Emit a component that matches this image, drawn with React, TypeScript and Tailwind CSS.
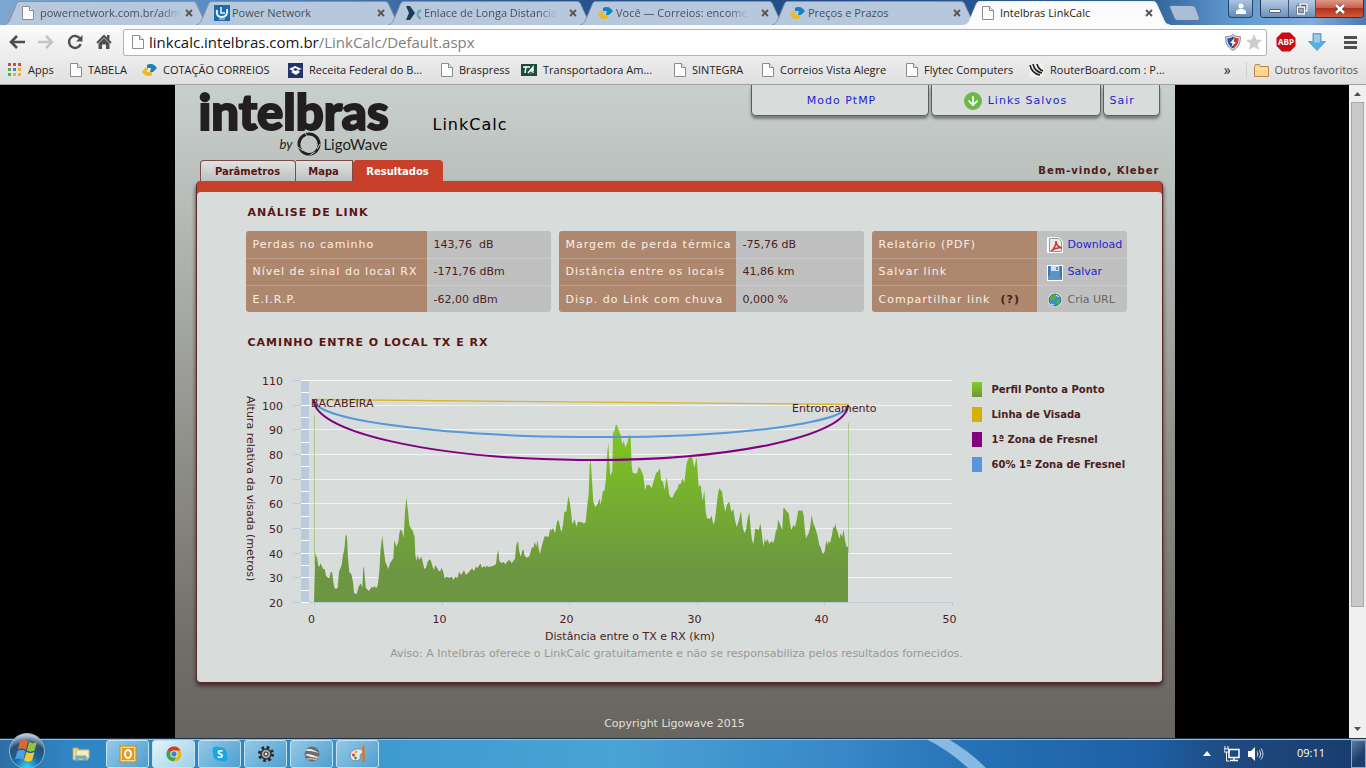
import React from 'react'
import { ArrowDown } from 'lucide-react'

type Row = { label: string; value: React.ReactNode; help?: boolean }

const verdana = "font-['DejaVu_Sans',Verdana,sans-serif]"

const grid = [110, 100, 90, 80, 70, 60, 50, 40, 30, 20]
const kms = [0, 10, 20, 30, 40, 50]

const yOf = (m: number) => Math.round(15 + (110 - m) * 2.467) + 0.5
const xOf = (km: number) => Math.round(68 + km * 12.76) + 0.5

// terrain outline, three units to a chart pixel
const terrain =
  '238,560 240,572 243,578 247,602 250,605 254,594 258,605 262,612 266,612 270,632 276,638 280,640 284,622 288,620 292,652 295,668 300,672 305,668 309,620 317,600 321,570 325,552 328,520 330,508 333,515 336,580 340,622 346,628 351,650 354,683 362,688 368,665 374,655 379,668 382,605 384,608 389,668 398,678 408,665 412,668 416,662 420,670 425,662 430,620 434,550 439,512 444,560 448,590 453,602 457,612 462,595 472,580 475,525 481,545 487,530 490,505 494,493 499,500 503,520 507,440 511,398 515,430 520,480 524,490 529,494 533,508 536,515 538,570 541,588 545,570 549,585 556,575 560,590 565,612 570,608 575,590 580,583 585,588 590,605 594,615 598,600 604,610 608,618 613,618 617,608 621,618 626,640 632,635 640,638 648,635 652,646 657,635 665,638 669,620 675,630 684,616 690,630 698,622 708,610 714,618 720,604 724,610 730,600 734,596 738,610 744,602 748,608 752,602 758,606 770,603 780,598 783,570 787,556 790,588 797,595 803,590 808,598 815,588 821,585 827,595 832,588 837,582 841,540 846,528 850,560 854,575 858,560 862,552 866,572 872,578 880,574 888,545 892,550 896,530 901,545 904,525 908,550 912,568 918,540 926,514 938,515 943,490 947,497 951,488 957,505 963,470 967,464 971,480 976,502 981,480 985,440 ' +
  '991,440 997,393 1001,410 1004,430 1009,478 1016,463 1021,485 1026,470 1040,472 1044,476 1049,470 1054,420 1058,390 1061,300 1064,285 1067,330 1072,410 1078,427 1086,415 1091,400 1094,420 1100,380 1106,375 1110,340 1114,260 1117,233 1120,290 1123,333 1126,325 1129,320 1131,205 1136,195 1139,180 1143,180 1148,195 1154,210 1159,240 1163,226 1168,248 1175,230 1180,208 1184,220 1187,300 1190,323 1203,326 1208,305 1214,312 1222,332 1227,375 1232,360 1240,360 1247,370 1254,345 1260,325 1267,318 1272,310 1275,345 1281,350 1286,375 1291,337 1295,355 1300,390 1305,398 1310,397 1315,385 1324,372 1328,358 1334,357 1339,340 1345,353 1350,310 1353,290 1358,280 1362,272 1369,280 1375,308 1379,290 1382,276 1385,320 1388,365 1394,360 1400,408 1405,374 1409,440 1413,460 1421,462 1427,452 1432,480 1437,465 1442,420 1446,385 1450,370 1458,380 1462,410 1468,440 1473,418 1480,410 1486,440 1492,432 1496,460 1502,487 1509,465 1515,437 1519,480 1525,505 1530,495 1535,460 1540,442 1544,490 1548,525 1552,537 1558,490 1568,495 1573,475 1577,500 1582,545 1587,520 1590,532 1595,522 1599,536 1607,528 1612,535 1616,520 1621,490 1623,500 1626,463 1632,478 1639,495 1642,430 1646,430 1653,440 1658,445 1662,475 1666,495 1672,480 1677,485 1682,465 1687,435 1692,438 1699,436 1703,450 1706,490 1710,520 1718,505 1722,490 1727,450 1732,475 1738,490 1744,510 1750,540 1755,550 1760,567 1766,560 1771,525 1774,540 1778,528 1782,535 1788,510 1792,485 1795,490 1798,475 1802,495 1806,505 1810,522 1814,505 1819,515 1823,493 1827,525 1831,545 1836,545'

function PageIcon() {
  return (
    <svg width="12" height="14" viewBox="0 0 12 14" className="shrink-0">
      <path d="M.5.5h7l4 4v9H.5z" fill="#fdfdfd" stroke="#8c8c8c" />
      <path d="M7.500.5v4h4" fill="#e8e8e8" stroke="#8c8c8c" />
    </svg>
  )
}

function CorreiosIcon() {
  return (
    <svg width="15" height="14" viewBox="0 0 15 14" className="shrink-0">
      <path d="M5 2c1-1 2-1 4-1 3 0 4 2 6 4l-4 4H8l1-4H5z" fill="#1783b5" />
      <path d="M10 12c-1 1-2 1-4 1-3 0-4-2-6-4l3-4h3L5 9h5z" fill="#f2b824" />
    </svg>
  )
}

function PowerIcon() {
  return (
    <svg width="16" height="16" viewBox="0 0 16 16" className="shrink-0">
      <rect width="16" height="16" fill="#1c6cac" />
      <path d="M3 5c-1 5 1 7 5 7s6-3 5-8" fill="none" stroke="#eaf5ff" strokeWidth="2" />
      <path d="M7 2v6h4" fill="none" stroke="#eaf5ff" strokeWidth="1.500" />
      <path d="M5 14h6" stroke="#cfe3f5" />
    </svg>
  )
}

function EnlaceIcon() {
  return (
    <svg width="16" height="16" viewBox="0 0 16 16" className="shrink-0">
      <path d="M0 1h4l5 7-5 7H0l3-7z" fill="#1d3d57" />
      <path d="M15 4c-6 1-6 9 0 11V12c-3-1-3-4 0-5z" fill="#75a5ba" />
    </svg>
  )
}

function ReceitaIcon() {
  return (
    <svg width="15" height="15" viewBox="0 0 15 15" className="shrink-0">
      <rect width="15" height="15" fill="#22336b" />
      <path d="M1 6l6-3 7 3-4 1 2 2-4 3-5-3 2-1z" fill="#fff" />
      <path d="M5 6l3-1 2 2-3 1z" fill="#22336b" />
    </svg>
  )
}

function TransportadoraIcon() {
  return (
    <svg width="16" height="12" viewBox="0 0 16 12" className="shrink-0">
      <rect width="16" height="12" fill="#1b4d3e" />
      <path d="M2 3h7M5 3L4 9M7 9l5-6v6M8 7h5" stroke="#fff" strokeWidth="1.500" fill="none" />
      <path d="M9 10l4-3" stroke="#d4752e" />
    </svg>
  )
}

function RouterIcon() {
  return (
    <svg width="15" height="14" viewBox="0 0 15 14" className="shrink-0">
      <rect width="15" height="14" rx="2" fill="#f0f0f0" />
      <path d="M1 2c1 5 5 9 10 10M4 1c1 5 4 8 9 9M8 1c1 4 3 6 6 7" stroke="#222" strokeWidth="1.600" fill="none" />
    </svg>
  )
}

function AppsIcon() {
  const fills = ['#d9483b', '#d9483b', '#d9483b', '#4caf50', '#3f7fd9', '#e8b32b', '#4caf50', '#e8b32b', '#e8b32b']
  return (
    <svg width="14" height="14" viewBox="0 0 14 14" className="shrink-0">
      {fills.map((f, i) => (
        <rect key={i} x={(i % 3) * 5} y={Math.floor(i / 3) * 5} width="3" height="3" fill={f} />
      ))}
    </svg>
  )
}

const tabs = [
  { title: 'powernetwork.com.br/adm', icon: <PageIcon />, fade: true },
  { title: 'Power Network', icon: <PowerIcon /> },
  { title: 'Enlace de Longa Distancia', icon: <EnlaceIcon />, fade: true },
  { title: 'Você — Correios: encome', icon: <CorreiosIcon />, fade: true },
  { title: 'Preços e Prazos', icon: <CorreiosIcon /> },
  { title: 'Intelbras LinkCalc', icon: <PageIcon />, active: true },
]

const bookmarks = [
  { title: 'Apps', icon: <AppsIcon />, width: 'w-[62px]' },
  { title: 'TABELA', icon: <PageIcon />, width: 'w-[72px]' },
  { title: 'COTAÇÃO CORREIOS', icon: <CorreiosIcon />, width: 'w-[146px]' },
  { title: 'Receita Federal do B...', icon: <ReceitaIcon />, width: 'w-[153px]' },
  { title: 'Braspress', icon: <PageIcon />, width: 'w-[80px]' },
  { title: 'Transportadora Am...', icon: <TransportadoraIcon />, width: 'w-[153px]' },
  { title: 'SINTEGRA', icon: <PageIcon />, width: 'w-[88px]' },
  { title: 'Correios Vista Alegre', icon: <PageIcon />, width: 'w-[144px]' },
  { title: 'Flytec Computers', icon: <PageIcon />, width: 'w-[123px]' },
  { title: 'RouterBoard.com : P...', icon: <RouterIcon />, width: 'w-[150px]' },
]

function TabStrip() {
  return (
    <div className="flex h-[25px] shrink-0 bg-[linear-gradient(90deg,#7fa6cf_0%,#5b8dc0_15%,#27538f_40%,#214d87_60%,#2f6096_84%,#5e97cc_90%,#83addb_96%,#4a7ab2_100%)] pl-1">
      {tabs.map(tab => (
        <div key={tab.title} className={`relative h-[25px] w-[207px] -mr-[15px] ${tab.active ? 'z-10' : ''}`}>
          <svg viewBox="0 0 207 25" className="absolute inset-0 h-full w-full">
            <path
              d="M0 25C4 24 5 22 7 17L12 5C13 2 14 1.500 17 1.500H188C191 1.500 192 2 193 5L199 18C201 23 202 24 206 25"
              fill={tab.active ? '#fbfbfb' : '#b7c8dd'}
              stroke={tab.active ? '#e8eef5' : '#7d93ae'}
            />
          </svg>
          <div className="relative flex h-[26px] items-center px-[18px]">
            <span className="flex w-[18px] shrink-0">{tab.icon}</span>
            <span
              className={`whitespace-nowrap text-[11px] ${tab.active ? 'text-[#222]' : 'text-[#46505c]'} ${
                tab.fade ? '[mask-image:linear-gradient(90deg,#000_86%,transparent)]' : ''
              }`}
            >
              {tab.title}
            </span>
            <button aria-label="Fechar guia" className="ml-auto">
              <svg width="8" height="8" viewBox="0 0 8 8">
                <path d="M1 1l6 6M7 1L1 7" stroke="#555" strokeWidth="1.800" />
              </svg>
            </button>
          </div>
        </div>
      ))}
      <button aria-label="Nova guia" className="ml-[13px] mt-[5px] h-[16px] w-[32px]">
        <svg width="32" height="16" viewBox="0 0 32 16">
          <path d="M3 .5h20c2 0 3 1 4 3l3 8c1 3 0 4-2 4H9c-2 0-3-1-4-3L1 3C0 1.500 1 .5 3 .5z" fill="#a9bfd8" stroke="#56779f" />
        </svg>
      </button>
      <div className="ml-auto mr-[2px] flex items-start">
        <button
          aria-label="Usuário"
          className="mr-[7px] flex h-[18px] w-[25px] items-center justify-center rounded-b-[4px] border border-t-0 border-[#26466f] bg-[linear-gradient(#aac4e0,#6189b5)]"
        >
          <svg width="10" height="11" viewBox="0 0 10 11">
            <circle cx="5" cy="3" r="2.500" fill="#fff" />
            <path d="M0 11V8l3-2h4l3 2v3z" fill="#fff" />
          </svg>
        </button>
        <div className="flex h-[18px] overflow-hidden rounded-b-[4px] border border-t-0 border-[#26364f]">
          <button aria-label="Minimizar" className="flex w-[28px] items-center justify-center border-r border-[#3d5879] bg-[linear-gradient(#b5cae3,#6e91b9)]">
            <span className="mt-1 h-[4px] w-[12px] rounded-[1px] border border-[#55637a] bg-white" />
          </button>
          <button aria-label="Restaurar" className="flex w-[27px] items-center justify-center border-r border-[#3d5879] bg-[linear-gradient(#b5cae3,#6e91b9)]">
            <svg width="12" height="12" viewBox="0 0 12 12">
              <path d="M4 3V1h7v7H9M1.500 4h7v7h-7z" fill="none" stroke="#4c5a70" strokeWidth="3" />
              <path d="M4 3V1h7v7H9M1.500 4h7v7h-7z" fill="none" stroke="#fff" strokeWidth="1.500" />
            </svg>
          </button>
          <button aria-label="Fechar" className="flex w-[47px] items-center justify-center bg-[linear-gradient(#dd9a8b_0%,#c85c47_48%,#b2301b_50%,#cf5b3c_100%)]">
            <svg width="12" height="10" viewBox="0 0 12 10">
              <path d="M2 1l8 8M10 1L2 9" stroke="#5a3a3a" strokeWidth="4" />
              <path d="M2 1l8 8M10 1L2 9" stroke="#fff" strokeWidth="2.500" />
            </svg>
          </button>
        </div>
      </div>
    </div>
  )
}

function Toolbar() {
  return (
    <div className="flex h-[34px] shrink-0 items-center bg-[linear-gradient(#fbfbfb,#ebebeb)] pl-[9px] pr-2">
      <button aria-label="Voltar" className="w-[29px]">
        <svg width="16" height="14" viewBox="0 0 16 14">
          <path d="M8 1L2 7l6 6M2 7h14" fill="none" stroke="#4d4d4d" strokeWidth="2.600" />
        </svg>
      </button>
      <button aria-label="Avançar" className="w-[29px]">
        <svg width="16" height="14" viewBox="0 0 16 14">
          <path d="M8 1l6 6-6 6M14 7H0" fill="none" stroke="#c4c4c4" strokeWidth="2.600" />
        </svg>
      </button>
      <button aria-label="Recarregar" className="w-[29px]">
        <svg width="16" height="16" viewBox="0 0 16 16">
          <path d="M13 4.500A6 6 0 1 0 13.700 10" fill="none" stroke="#505050" strokeWidth="2.400" />
          <path d="M15.500 1v6.500H9z" fill="#505050" />
        </svg>
      </button>
      <button aria-label="Página inicial" className="w-[27px]">
        <svg width="16" height="16" viewBox="0 0 16 16">
          <path d="M1 9l7-7 7 7" fill="none" stroke="#505050" strokeWidth="2" />
          <path d="M11 1h2.500v5L11 4zM8 4l5.500 5.500V15H10v-4.500H6V15H2.500V9.500z" fill="#505050" />
        </svg>
      </button>
      <div className="flex h-[27px] flex-1 items-center rounded-[2px] border border-[#b4b4b4] bg-white pl-2 pr-1">
        <PageIcon />
        <div className="ml-[5px] flex-1 text-[15px] leading-5 text-[#808080]">
          <span className="text-[#151515]">linkcalc.intelbras.com.br</span>/LinkCalc/Default.aspx
        </div>
        <svg width="16" height="17" viewBox="0 0 16 17" className="mr-[5px]">
          <path d="M8 .7c2 1.600 4.500 2 7.300 2 .2 7-2 11-7.300 13.600C2.700 13.700.5 9.700.7 2.700 3.500 2.700 6 2.300 8 .7z" fill="#e8eaf0" stroke="#777d8c" />
          <path d="M8 2.500C6.500 3.700 4.500 4.200 2.300 4.300 2.400 9 4 12.500 8 14.500z" fill="#274f9f" />
          <path d="M8 2.500c1.500 1.200 3.500 1.700 5.700 1.800C13.600 9 12 12.500 8 14.500z" fill="#d0342c" />
          <path d="M9.500 4L5 9h2.500l-1 4L11 8H8.500z" fill="#fff" />
        </svg>
        <svg width="16" height="16" viewBox="0 0 16 16">
          <path d="M8 0l2.300 5.500 5.700.5-4.300 3.800L13 16l-5-3.300L3 16l1.300-6.200L0 6l5.700-.5z" fill="#cdcdcd" />
        </svg>
      </div>
      <button aria-label="Adblock Plus" className="ml-[9px]">
        <svg width="20" height="20" viewBox="0 0 20 20">
          <path d="M6 .5h8L19.500 6v8L14 19.500H6L.5 14V6z" fill="#c70d13" />
          <text x="10" y="13" textAnchor="middle" fontSize="8" fontWeight="700" fontFamily="Open Sans, sans-serif" fill="#fff">
            ABP
          </text>
        </svg>
      </button>
      <button aria-label="Downloads" className="ml-[12px]">
        <svg width="18" height="18" viewBox="0 0 18 18">
          <path d="M5 .5h8v8h4.500L9 17.500.5 8.500H5z" fill="#4fb1e8" stroke="#6d9dc0" />
          <path d="M6 1.500h6v8H6z" fill="#9ccbe6" />
        </svg>
      </button>
      <button aria-label="Menu" className="ml-[18px] mr-px">
        <svg width="13" height="13" viewBox="0 0 13 13">
          <path d="M0 1.500h13M0 6.500h13M0 11.500h13" stroke="#505050" strokeWidth="3" />
        </svg>
      </button>
    </div>
  )
}

function BookmarksBar() {
  return (
    <nav className="flex h-[26px] shrink-0 items-center border-b border-[#a0a0a0] bg-[linear-gradient(#ebebeb,#e0e0e0)] px-2 pb-[3px] text-[11px] text-[#222]">
      {bookmarks.map(b => (
        <a key={b.title} href="#" className={`flex shrink-0 items-center gap-[6px] whitespace-nowrap ${b.width}`}>
          {b.icon}
          {b.title}
        </a>
      ))}
      <button aria-label="Mais favoritos" className="ml-auto mr-[7px] border-r border-[#d0d0d0] pr-[15px] text-[14px] leading-4">
        »
      </button>
      <a href="#" className="flex items-center gap-[6px]">
        <svg width="15" height="13" viewBox="0 0 15 13">
          <path d="M.5 2.500l1-2h4l1 2h8v10H.5z" fill="#f8d48f" stroke="#b78b47" />
          <path d="M1.500 5h12" stroke="#fdebc5" />
        </svg>
        <span className="text-[#555]">Outros favoritos</span>
      </a>
    </nav>
  )
}

function Logo() {
  return (
    <div className="w-[190px] shrink-0 font-['Lato'] text-[#231f20]">
      <div className="pt-[5px] text-[49px] font-black leading-[42px] [-webkit-text-stroke:2px_#231f20]">intelbras</div>
      <div className="flex items-center justify-end pr-px text-[15px] leading-6">
        <span className="mr-[5px] text-[13px] italic">by</span>
        <svg width="24" height="24" viewBox="0 0 24 24" className="mr-[2px]">
          <path
            fillRule="evenodd"
            d="M12 .5a11.500 11.500 0 1 0 0 23 11.500 11.500 0 0 0 0-23zM12.500 3.500a8.700 8.700 0 1 1-1 17.400 8.700 8.700 0 0 1 1-17.400z"
            fill="#231f20"
          />
          <path d="M1 15l5 4M8 1l3 4M18 20l-5 3M20 17l3-5" stroke="#c0c7c4" strokeWidth="1" />
        </svg>
        LigoWave
      </div>
    </div>
  )
}

function TopLinks() {
  const box = 'flex h-[31px] items-center rounded-b-[5px] border border-t-0 border-[#5b5f5e] bg-[#d8dcda] pt-[2px] shadow-[0_3px_3px_#777c7a]'
  return (
    <div className="ml-auto mr-[3px] flex gap-[2px] text-[11px] tracking-[1px] text-[#1f1fd0]">
      <a href="#" className={`${box} w-[178px] justify-center pl-1`}>
        Modo PtMP
      </a>
      <a href="#" className={`${box} w-[170px] justify-center gap-[6px]`}>
        <span className="flex h-[18px] w-[18px] items-center justify-center rounded-full bg-[#6cb84a]">
          <ArrowDown size={14} strokeWidth={3} color="#fff" />
        </span>
        Links Salvos
      </a>
      <a href="#" className={`${box} w-[57px] pl-[6px]`}>
        Sair
      </a>
    </div>
  )
}

function ResultTable({ rows, width, labelWidth }: { rows: Row[]; width: string; labelWidth: string }) {
  return (
    <div className={`overflow-hidden rounded-[3px] ${width}`}>
      <table className="w-full table-fixed border-collapse text-left text-[11px]">
        <tbody>
          {rows.map((row, i) => (
            <tr key={row.label} className={`h-[27px] ${i > 0 ? 'border-t border-[#ffffff2e]' : ''}`}>
              <th scope="row" className={`whitespace-nowrap bg-[#ad886f] pl-[7px] pt-[2px] font-normal tracking-[1px] text-[#fbeee4] ${labelWidth}`}>
                {row.label}
                {row.help && <b className="ml-[10px] text-[#4a1c1c]">(?)</b>}
              </th>
              <td className="whitespace-pre bg-[#c0c0c0] pl-[7px] pt-[2px] text-[#4a2020]">{row.value}</td>
            </tr>
          ))}
        </tbody>
      </table>
    </div>
  )
}

const download = (
  <a href="#" className="ml-[3px] flex items-center gap-[5px] text-[#1f1fd0]">
    <svg width="16" height="16" viewBox="0 0 16 16">
      <path d="M.5.500h11l4 4v11H.5z" fill="#f6f6f6" stroke="#fff" />
      <path d="M2.500 1.500h9l3 3v10h-12z" fill="#e9e9e9" stroke="#999" />
      <path d="M4 14c3-2 5-5 5-10 0 4 2 6 6 7-4-1-7 0-11 3z" fill="none" stroke="#d2322c" strokeWidth="1.500" />
    </svg>
    Download
  </a>
)

const save = (
  <a href="#" className="ml-[3px] flex items-center gap-[5px] text-[#1f1fd0]">
    <svg width="16" height="16" viewBox="0 0 16 16">
      <rect width="16" height="16" fill="#fff" />
      <rect x="1" y="1" width="14" height="14" fill="#5d92c9" />
      <rect x="4" y="1" width="8" height="5" fill="#cfe3f5" />
      <path d="M1 1h2v9l-2 2zM13 1h2v14l-2-4z" fill="#3f74ae" />
      <rect x="9" y="2" width="2" height="3" fill="#5d92c9" />
    </svg>
    Salvar
  </a>
)

const share = (
  <span className="ml-[3px] flex items-center gap-[5px] text-[#666]">
    <svg width="16" height="16" viewBox="0 0 16 16">
      <circle cx="8" cy="8" r="7" fill="#fff" />
      <circle cx="8" cy="8" r="6" fill="#3b8fd0" stroke="#2a6496" />
      <path d="M3 5l4-3 3 2-2 3-3 1-2 2zM9 9l4-3v5l-3 3z" fill="#52b043" />
      <path d="M9 3l3 2M4 12l3 1" stroke="#dff2ff" />
    </svg>
    Cria URL
  </span>
)

const losses: Row[] = [
  { label: 'Perdas no caminho', value: '143,76  dB' },
  { label: 'Nível de sinal do local RX', value: '-171,76 dBm' },
  { label: 'E.I.R.P.', value: '-62,00 dBm' },
]

const margins: Row[] = [
  { label: 'Margem de perda térmica', value: '-75,76 dB' },
  { label: 'Distância entre os locais', value: '41,86 km' },
  { label: 'Disp. do Link com chuva', value: '0,000 %' },
]

const actions: Row[] = [
  { label: 'Relatório (PDF)', value: download },
  { label: 'Salvar link', value: save },
  { label: 'Compartilhar link', value: share, help: true },
]

const legend = [
  { label: 'Perfil Ponto a Ponto', color: 'bg-[linear-gradient(#84cf22,#6a9640)]' },
  { label: 'Linha de Visada', color: 'bg-[#d9b000]' },
  { label: '1ª Zona de Fresnel', color: 'bg-[#800080]' },
  { label: '60% 1ª Zona de Fresnel', color: 'bg-[#5896dc]' },
]

function PathChart() {
  return (
    <svg width="716" height="282" viewBox="0 0 716 282" className="shrink-0" fontSize="11" fill="#4a2020">
      <defs>
        <linearGradient id="terrain" gradientUnits="userSpaceOnUse" x1="0" y1="180" x2="0" y2="620">
          <stop offset="0" stopColor="#7fc81f" />
          <stop offset="1" stopColor="#6c9641" />
        </linearGradient>
      </defs>
      <rect x="55" y="15" width="8" height="222" fill="#b9cbdd" />
      {grid.map(m => (
        <g key={m}>
          <path d={`M63 ${yOf(m)}H706`} stroke={m === 20 ? '#bccbd8' : '#f0f3f2'} />
          <path d={`M47 ${yOf(m)}h8`} stroke="#b9cbdd" />
          <path d={`M55 ${yOf(m)}h8`} stroke="#fff" />
          {m < 110 && <path d={`M55 ${yOf(m + 5)}h8`} stroke="#fff" />}
          <text x="37" y={yOf(m) + 4} textAnchor="end">
            {m}
          </text>
        </g>
      ))}
      {kms.map(km => (
        <g key={km}>
          <path d={`M${xOf(km)} 237v4`} stroke="#b9cbdd" />
          <text x={xOf(km) - 3} y="258" textAnchor="middle">
            {km}
          </text>
        </g>
      ))}
      <g transform="scale(.33333) translate(-30 0)">
        <path d={`M234,711L${terrain} 1836,711Z`} fill="url(#terrain)" />
      </g>
      <path d="M68.500 50v150M602.500 58v130" stroke="#8fbc62" strokeOpacity=".6" />
      <path d="M69 34.500L603 39.500" stroke="#d9b52a" strokeWidth="1.300" />
      <path d="M68 35A267 34.500 .5 0 0 602 40" fill="none" stroke="#5896dc" strokeWidth="2" />
      <path d="M68 35A267 57.500 .5 0 0 602 40" fill="none" stroke="#800080" strokeWidth="2" />
      <text x="65" y="42">
        BACABEIRA
      </text>
      <text x="546" y="47">
        Entroncamento
      </text>
      <text x="384" y="275" textAnchor="middle">
        Distância entre o TX e RX (km)
      </text>
      <text transform="translate(1 31) rotate(90)">Altura relativa da visada (metros)</text>
    </svg>
  )
}

function LinkCalc() {
  const navTab = 'flex h-[21px] items-center justify-center border border-b-0 border-[#7c4a45] bg-[linear-gradient(#dfe3e1,#bcc2bf)] text-[#5a1515]'
  return (
    <div className={`mx-auto w-full max-w-[1000px] bg-[linear-gradient(#c8d0cd,#b3b8b4_22%,#9b9c97_45%,#726f6a_85%,#68645f)] pl-[21px] pr-3 ${verdana}`}>
      <header className="flex h-[75px] items-start pl-[3px]">
        <Logo />
        <h1 className="ml-[44px] mt-[28px] text-[16px] leading-6 tracking-[1px] text-black">LinkCalc</h1>
        <TopLinks />
      </header>
      <div className="flex items-end justify-between pl-1 pr-[3px] text-[10px] font-bold">
        <nav className="flex">
          <a href="#" className={`${navTab} w-[96px] rounded-t-[4px]`}>
            Parâmetros
          </a>
          <a href="#" className={`${navTab} w-[57px] border-l-0`}>
            Mapa
          </a>
          <a href="#" className="flex h-[21px] w-[90px] items-center justify-center rounded-t-[4px] bg-[#c9402a] pt-[2px] text-white">
            Resultados
          </a>
        </nav>
        <p className="self-center tracking-[1px] text-[#4a1c1c]">Bem-vindo, Kleber</p>
      </div>
      <main className="rounded-[5px] border border-t-0 border-[#5c2a2e] bg-[#c9402a] pt-[11px] shadow-[0_3px_4px_#3f2c2c]">
        <div className="rounded-[4px] bg-[#d8dcda] pb-[21px] pl-[49px] pt-[13px]">
          <h2 className="ml-[2px] text-[11px] font-bold leading-4 tracking-[1px] text-[#5a1515]">ANÁLISE DE LINK</h2>
          <div className="mt-[10px] flex gap-2">
            <ResultTable rows={losses} width="w-[305px]" labelWidth="w-[181px]" />
            <ResultTable rows={margins} width="w-[305px]" labelWidth="w-[177px]" />
            <ResultTable rows={actions} width="w-[255px]" labelWidth="w-[165px]" />
          </div>
          <h2 className="ml-[2px] mt-[23px] text-[11px] font-bold leading-4 tracking-[1px] text-[#5a1515]">CAMINHO ENTRE O LOCAL TX E RX</h2>
          <div className="mt-[14px] flex gap-[10px]">
            <PathChart />
            <ul className="flex flex-col gap-[10px] pt-[17px]">
              {legend.map(l => (
                <li key={l.label} className="flex h-[15px] items-center gap-[10px] whitespace-nowrap text-[10px] font-bold text-[#4a2020]">
                  <span className={`h-[15px] w-[10px] ${l.color}`} />
                  {l.label}
                </li>
              ))}
            </ul>
          </div>
          <p className="pr-[54px] text-center text-[11px] leading-[14px] text-[#999]">
            Aviso: A Intelbras oferece o LinkCalc gratuitamente e não se responsabiliza pelos resultados fornecidos.
          </p>
        </div>
      </main>
      <footer className="mt-[33px] pr-[9px] text-center text-[11px] leading-4 text-[#e0e0d8]">Copyright Ligowave 2015</footer>
    </div>
  )
}

function Scrollbar() {
  return (
    <div className="flex w-[17px] shrink-0 flex-col items-center bg-[#f0f0f0]">
      <svg width="17" height="17" viewBox="0 0 17 17">
        <path d="M5 11h7L8.500 7z" fill="#505050" />
      </svg>
      <div className="w-[13px] grow-[505] border border-[#a8a8a8] bg-[#c9c9c9]" />
      <div className="grow-[114]" />
      <svg width="17" height="17" viewBox="0 0 17 17">
        <path d="M5 6h7l-3.500 4z" fill="#505050" />
      </svg>
    </div>
  )
}

const apps = [
  {
    name: 'Outlook',
    icon: (
      <>
        <rect x="1" y="1" width="16" height="16" fill="#f6d57e" stroke="#c98b1c" />
        <rect x="3" y="3" width="12" height="12" fill="#e39a1e" />
        <ellipse cx="9" cy="9" rx="3" ry="4" fill="none" stroke="#fff" strokeWidth="2" />
      </>
    ),
  },
  {
    name: 'Chrome',
    active: true,
    icon: (
      <>
        <circle cx="9" cy="9" r="7.500" fill="#e8b91f" />
        <path d="M9 9L2.500 5.200A7.500 7.500 0 0 1 15.500 5.500L9 5.500z" fill="#d93b2b" />
        <path d="M9 9L2.500 5.200A7.500 7.500 0 0 0 8.500 16.500L12 11z" fill="#3fa34d" />
        <circle cx="9" cy="9" r="3.600" fill="#fff" />
        <circle cx="9" cy="9" r="2.700" fill="#3f7fd0" />
      </>
    ),
  },
  {
    name: 'Skype',
    icon: (
      <>
        <circle cx="9" cy="9" r="7" fill="#18a7e4" />
        <circle cx="5.500" cy="5.500" r="4" fill="#18a7e4" />
        <circle cx="12.500" cy="12.500" r="4" fill="#18a7e4" />
        <text x="9" y="13" textAnchor="middle" fontSize="11" fontWeight="700" fill="#fff">
          S
        </text>
      </>
    ),
  },
  {
    name: 'Configurações',
    icon: (
      <>
        <circle cx="9" cy="9" r="6.500" fill="none" stroke="#222" strokeWidth="3" strokeDasharray="2.500 2.600" />
        <circle cx="9" cy="9" r="5" fill="#a9a9a9" stroke="#333" strokeWidth="1.500" />
        <circle cx="9" cy="9" r="2" fill="#e8e8e8" stroke="#222" />
      </>
    ),
  },
  {
    name: 'SketchUp',
    icon: (
      <>
        <circle cx="9" cy="9" r="7.500" fill="#6d6d6d" />
        <path d="M2 6c3-4 9-1 14 2-5-1-9-3-14-2zM2 10c4-3 8 1 14 2-1 2-8 0-14-2z" fill="#f0f0f0" />
        <path d="M4 14c4-1 7 1 10 0" stroke="#ddd" fill="none" />
      </>
    ),
  },
  {
    name: 'Paint',
    icon: (
      <>
        <path d="M1 11c0-5 5-8 10-7 4 1 3 4 1 5s0 3-1 5c-3 3-10 2-10-3z" fill="#e4e8ee" stroke="#7f8fa8" />
        <circle cx="4.500" cy="10" r="1.500" fill="#d33" />
        <circle cx="7" cy="7" r="1.400" fill="#e8b31f" />
        <circle cx="6.500" cy="13" r="1.400" fill="#3a9c4a" />
        <path d="M14.500 1v16" stroke="#c97a35" strokeWidth="2.500" />
      </>
    ),
  },
]

function Taskbar() {
  return (
    <footer className="relative flex h-[30px] shrink-0 items-center border-t border-[#1c3347] bg-[linear-gradient(90deg,#2f6ea6_0%,#2f86c4_5%,#2d86c4_20%,#3f9ad0_28%,#4aa3d6_45%,#3788c6_62%,#2570b4_72%,#1e60a5_84%,#1f4a80_90%,#173c6c_100%)] shadow-[inset_0_1px_0_#8fc0e0]">
      <svg className="absolute left-[920px] top-0" width="80" height="29" viewBox="0 0 80 29">
        <path d="M6 0h22c14 8 27 18 38 29H48C36 18 22 8 6 0z" fill="#b9defa" opacity=".65" />
      </svg>
      <button aria-label="Iniciar" className="absolute -top-[7px] left-[8px]">
        <svg width="38" height="38" viewBox="0 0 38 38">
          <defs>
            <radialGradient id="orb" cx=".5" cy=".95" r=".9">
              <stop offset="0" stopColor="#2fd4f6" />
              <stop offset=".4" stopColor="#1767a0" />
              <stop offset=".75" stopColor="#2a4d74" />
              <stop offset="1" stopColor="#b5c8d8" />
            </radialGradient>
          </defs>
          <circle cx="19" cy="19" r="17.500" fill="url(#orb)" stroke="#8fb6cf" />
          <path d="M12 9c3-1.500 5-1.500 8 .3L18 18c-3-2-5-2-8-.5z" fill="#e8622c" />
          <path d="M21 10c3 1.500 5 1.500 8 0l-2.500 8.500c-3 1.500-5 1.500-7.500 0z" fill="#8cc63e" />
          <path d="M9.500 19c3-1.500 5-1.500 8 .3L15 28c-3-2-5-2-8-.5z" fill="#4ba3e3" />
          <path d="M18.500 20c3 1.500 5 1.500 8 0L24 28.500c-3 1.500-5 1.500-8 0z" fill="#fcc72c" />
        </svg>
      </button>
      <button aria-label="Windows Explorer" className="ml-[72px] mr-[16px]">
        <svg width="18" height="18" viewBox="0 0 18 18">
          <path d="M1 3h5l1 2h9v10H1z" fill="#efe0a0" stroke="#b9a35c" />
          <path d="M4 5h13v8H4z" fill="#f5ecb9" stroke="#c9b873" />
          <path d="M4 16v-5h10v5h-2v-3H6v3z" fill="#78c0e4" stroke="#3d8fc0" strokeWidth=".7" />
        </svg>
      </button>
      <div className="flex gap-[3px]">
        {apps.map(app => (
          <button
            key={app.name}
            aria-label={app.name}
            className={`flex h-[28px] w-[43px] items-center justify-center rounded-[3px] border border-[#c3e2f3] ${
              app.active ? 'bg-[linear-gradient(135deg,#e4f3fa,#9dd0e8)]' : 'bg-[linear-gradient(135deg,#93c9e6,#4f9fd0)]'
            }`}
          >
            <svg width="18" height="18" viewBox="0 0 18 18">
              {app.icon}
            </svg>
          </button>
        ))}
      </div>
      <div className="ml-auto flex items-center text-[12px] text-white">
        <svg width="8" height="5" viewBox="0 0 8 5" className="mr-[13px]">
          <path d="M0 5h8L4 0z" fill="#fff" />
        </svg>
        <svg width="16" height="16" viewBox="0 0 16 16" className="mr-[8px]">
          <path d="M5 3.500h10v8H5zM10 11v3M6 14.500h8" fill="none" stroke="#fff" strokeWidth="1.500" />
          <path d="M1 0v3M4 0v3M0 3h5v3H0zM2.500 6v9h3" fill="none" stroke="#fff" />
        </svg>
        <svg width="16" height="14" viewBox="0 0 16 14" className="mr-[33px]">
          <path d="M0 4h3l4-4v14l-4-4H0z" fill="#fff" />
          <path d="M9 4.500c1 1.500 1 3.500 0 5M11 3c2 2.500 2 5.500 0 8M13 1.500c2.500 3.500 2.500 7.500 0 11" fill="none" stroke="#d5e2f0" />
        </svg>
        <time className="w-[54px] text-[11px]">09:11</time>
        <button aria-label="Mostrar área de trabalho" className="h-[28px] w-[15px] border border-[#8ba6c2] bg-[linear-gradient(135deg,#5d7ea3,#1c3f6d_60%)]" />
      </div>
    </footer>
  )
}

export default function App() {
  return (
    <div className="flex h-screen flex-col overflow-hidden bg-black font-['Open_Sans','Noto_Sans',sans-serif]">
      <TabStrip />
      <Toolbar />
      <BookmarksBar />
      <div className="flex min-h-0 flex-1">
        <div className="flex min-w-0 flex-1 overflow-hidden bg-black">
          <LinkCalc />
        </div>
        <Scrollbar />
      </div>
      <Taskbar />
    </div>
  )
}
